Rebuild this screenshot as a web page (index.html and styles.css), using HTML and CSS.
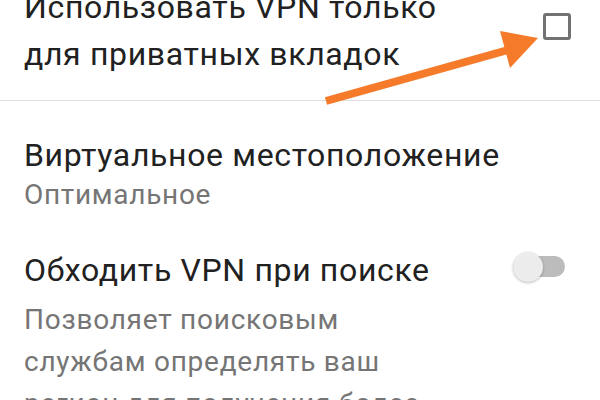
FILE: index.html
```html
<!DOCTYPE html>
<html lang="ru">
<head>
<meta charset="utf-8">
<link rel="stylesheet" href="styles.css">
</head>
<body>
<div class="list">
  <div class="row row-check">
    <div class="text">
      <div class="title two">Использовать VPN только<br>для приватных вкладок</div>
    </div>
    <div class="checkbox"></div>
  </div>
  <div class="divider"></div>
  <div class="row row-loc">
    <div class="text">
      <div class="title">Виртуальное местоположение</div>
      <div class="sub">Оптимальное</div>
    </div>
  </div>
  <div class="row row-bypass">
    <div class="text narrow">
      <div class="title">Обходить VPN при поиске</div>
      <div class="desc">Позволяет поисковым службам определять ваш регион для получения более точных результатов</div>
    </div>
    <div class="switch"><span class="thumb"></span></div>
  </div>
</div>
<svg class="arrow" width="600" height="400" viewBox="0 0 600 400">
  <line x1="326" y1="101" x2="508" y2="50" stroke="#f57b2b" stroke-width="8" stroke-linecap="butt"/>
  <polygon points="500,31 538,38 510,68" fill="#f57b2b"/>
</svg>
</body>
</html>
```
FILE: styles.css
```css
html, body {
  margin: 0;
  padding: 0;
  background: #ffffff;
  overflow: hidden;
}
body {
  width: 600px;
  height: 400px;
  position: relative;
  font-family: Roboto, "Noto Sans", "DejaVu Sans", sans-serif;
  color: #202020;
}
.list {
  margin-top: -16px;
  display: flex;
  flex-direction: column;
}
.row {
  display: flex;
  align-items: flex-start;
  padding: 0 29px 0 24px;
}
.text {
  flex: 1;
  min-width: 0;
}
.title {
  font-size: 32px;
  line-height: 40px;
  letter-spacing: 0.65px;
  color: #212121;
}
.title.two {
  line-height: 47px;
}
.row-check {
  padding-bottom: 22px;
}
.checkbox {
  width: 22px;
  height: 21px;
  border: 3px solid #727272;
  border-radius: 3px;
  margin-top: 29px;
}
.divider {
  height: 1px;
  background: #dedede;
}
.row-loc {
  padding-top: 34px;
}
.sub {
  font-size: 28px;
  line-height: 36px;
  letter-spacing: 0.7px;
  color: #757575;
  margin-top: 2px;
}
.row-bypass {
  padding-top: 37px;
}
.narrow {
  flex: 0 0 406px;
}
.desc {
  font-size: 28px;
  line-height: 42px;
  letter-spacing: 0.75px;
  color: #757575;
  margin-top: 9px;
}
.switch {
  margin-left: auto;
  margin-right: 6px;
  margin-top: 6px;
  width: 52px;
  height: 21px;
  border-radius: 11px;
  background: #bcbcbc;
  position: relative;
}
.thumb {
  position: absolute;
  left: 0;
  top: -4px;
  width: 30px;
  height: 30px;
  border-radius: 50%;
  background: #ececec;
  box-shadow: 0 1px 3px rgba(0, 0, 0, 0.25);
}
.arrow {
  position: absolute;
  left: 0;
  top: 0;
  pointer-events: none;
}
```
